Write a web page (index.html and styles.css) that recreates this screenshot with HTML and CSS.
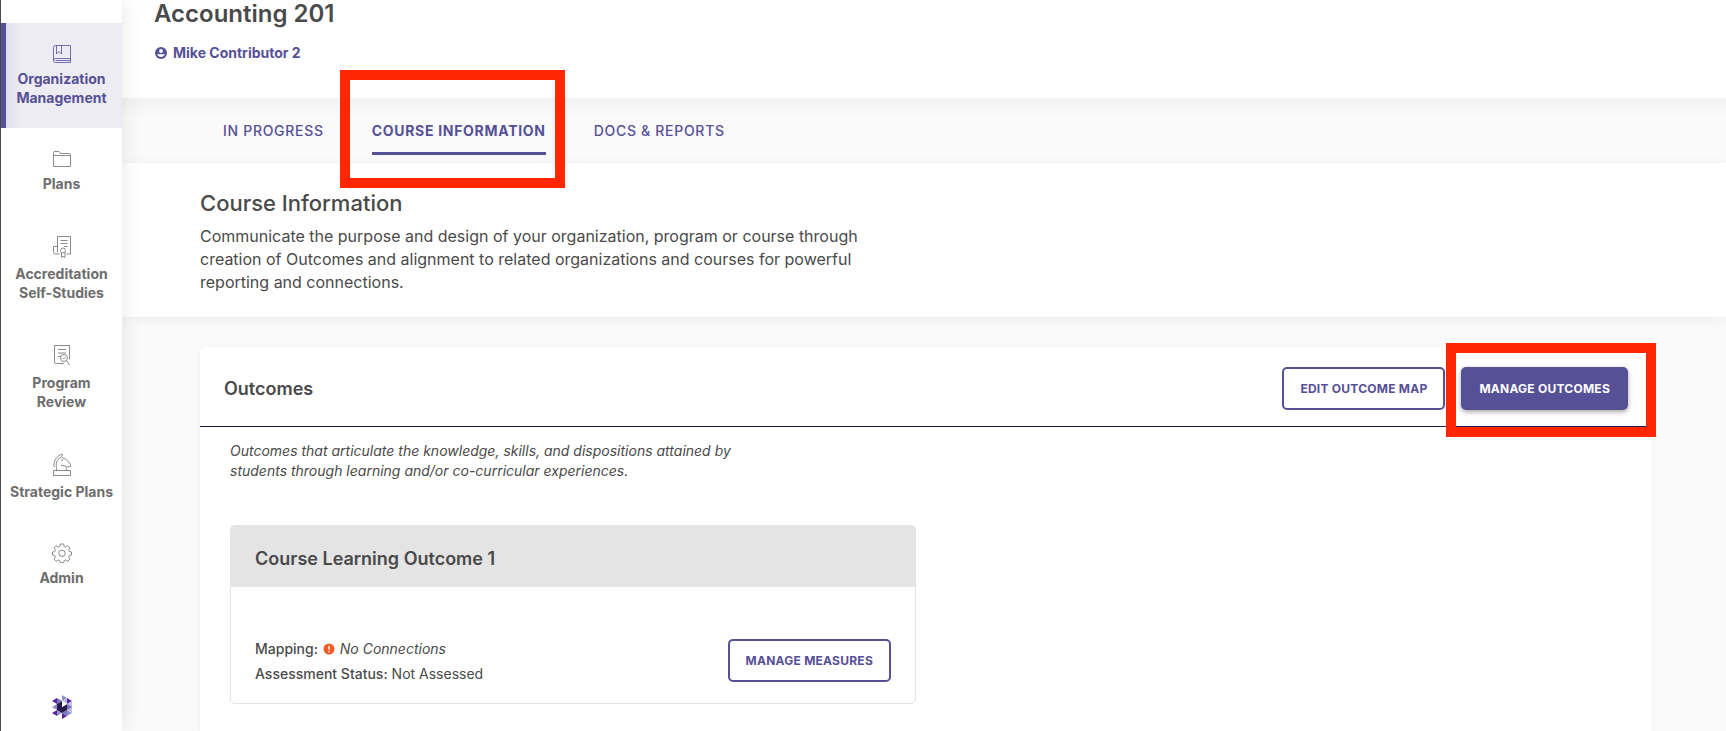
FILE: index.html
```html
<!DOCTYPE html>
<html lang="en">
<head>
    <meta charset="UTF-8">
    <meta name="viewport" content="width=device-width, initial-scale=1.0">
    <title>Accounting 201 - Course Information</title>
    <link rel="stylesheet" href="styles.css">
</head>
<body>

    <nav class="sidebar" aria-label="Main">
        <a class="nav-item active" href="#">
            <svg width="20" height="20" viewBox="0 0 20 20">
                <path d="M3.5 1.5h15v17h-15a2 2 0 0 1-2-2v-13a2 2 0 0 1 2-2z M1.5 16.5a2 2 0 0 1 2-2h15 M4.5 1.5v8.5l2.5-2.5 2.5 2.5V1.5 M3.5 16.5h15"/>
            </svg>
            Organization Management
        </a>
        <a class="nav-item" href="#">
            <svg width="20" height="20" viewBox="0 0 20 20">
                <path d="M1.5 17.5v-14a1 1 0 0 1 1-1h4.5l1.5 2h9a1 1 0 0 1 1 1v12z M1.5 6.5h17"/>
            </svg>
            Plans
        </a>
        <a class="nav-item" href="#">
            <svg width="20" height="24" viewBox="0 0 20 24">
                <path d="M5.5 17.5v-16h13v17.5h-4 M5.5 11.5h-4v6q0 1.5 2 1.5h4 M8.5 5.5h7 M8.5 8.5h7 M12 11.5h3.5"/>
                <circle cx="11" cy="15.5" r="2.5"/>
                <path d="M9.5 17.5v5l1.5-1.2 2 1.2v-5"/>
            </svg>
            Accreditation Self-Studies
        </a>
        <a class="nav-item" href="#">
            <svg width="20" height="24" viewBox="0 0 20 24">
                <path d="M12 19.5H4.5a2 2 0 0 1-2-2v-16h15v14 M6 5.5h8 M6 9h8 M6 12.5h3"/>
                <circle cx="12" cy="14" r="3.5"/>
                <path d="M14.5 16.5l3 4.5 M10.5 14l1 1 2-2"/>
            </svg>
            Program Review
        </a>
        <a class="nav-item" href="#">
            <svg width="20" height="24" viewBox="0 0 20 24">
                <path d="M1.5 17.5h17v5h-17z M4.5 17.5c0-5-1-8 1.5-11l3.5-3 1.5 1.5c4 1 5.5 4 7.5 6.5v2l-3 .5c-2-1-4-2-6.5-1.5 M14 14.5c0 1.5 1 1.5.5 3 M2 14c-.5-6 2-10.5 8-13l.5 2"/>
                <circle cx="10" cy="7" r=".4"/>
            </svg>
            Strategic Plans
        </a>
        <a class="nav-item" href="#">
            <svg width="20" height="20" viewBox="0 0 20 20">
                <path d="M8.3 1h3.4l.5 2.500 1.500.6 2.200-1.500 2 2.300-1.300 2 .6 1.500 2.300.6v3l-2.300.6-.6 1.500 1.300 2-2 2.300-2.200-1.500-1.500.6-.5 2.200H8.300l-.5-2.200-1.500-.6-2.200 1.500-2-2.300 1.300-2-.6-1.500-2.300-.6V9l2.300-.6.600-1.500-1.300-2 2-2.300 2.200 1.500 1.500-.6z"/>
                <circle cx="10" cy="10.3" r="3.2"/>
            </svg>
            Admin
        </a>

        <a class="logo" href="#" aria-label="Home">
            <svg width="22" height="24" viewBox="0 0 22 24">
                <path fill="#8f8fcf" d="M11 0l5 3-5 3z M1 12l5-3v6z M6 15l5 3-5 3z M16 15l5 3-5 3z"/>
                <path fill="#5b21a0" d="M1 6l5-3v6z M16 3l5 3-5 3z M1 18l5-3v6z M11 18l5 3-5 3z"/>
                <path fill="#c3bbe2" d="M11 6l5-3v6z M16 9l5-3v12l-5-3z"/>
                <path fill="#7773bd" d="M6 3l5 3-5 3z M11 18l5-3v6z M16 9l5 3-5 3z"/>
                <path fill="#2a1a4a" d="M11 6v6l5-3v6l-5 3-5-3V9z"/>
                <path fill="#fff" d="M11 6l5 3-5 3z"/>
            </svg>
        </a>
    </nav>

    <div class="page">
        <header class="page-header">
            <h1>Accounting 201</h1>
            <a class="owner" href="#">
                <svg width="14" height="12" viewBox="0 0 14 12">
                    <circle cx="7" cy="6" r="6" fill="#565096"/>
                    <circle cx="7" cy="4" r="1.9" fill="#fff"/>
                    <path fill="#fff" d="M3.2 7.3h7.6c-.7 1.8-2 2.7-3.8 2.7s-3.1-.9-3.8-2.7z"/>
                </svg>
                Mike Contributor 2
            </a>
        </header>

        <nav class="tabs" aria-label="Course">
            <a class="tab" href="#">IN PROGRESS</a>
            <a class="tab selected" href="#">COURSE INFORMATION<span class="highlight highlight-tab"></span></a>
            <a class="tab" href="#">DOCS &amp; REPORTS</a>
        </nav>

        <section class="intro">
            <h2>Course Information</h2>
            <p>Communicate the purpose and design of your organization, program or course through creation of Outcomes and alignment to related organizations and courses for powerful reporting and connections.</p>
        </section>

        <main class="content">
            <section class="card">
                <div class="card-header">
                    <h3>Outcomes</h3>
                    <div class="card-actions">
                        <button class="btn" type="button">EDIT OUTCOME MAP</button>
                        <div class="highlighted">
                            <button class="btn btn-primary" type="button">MANAGE OUTCOMES</button>
                            <span class="highlight highlight-button"></span>
                        </div>
                    </div>
                </div>
                <div class="card-body">
                    <p class="description">Outcomes that articulate the knowledge, skills, and dispositions attained by students through learning and/or co-curricular experiences.</p>
                    <div class="outcomes">
                        <article class="outcome">
                            <h4>Course Learning Outcome 1</h4>
                            <div class="outcome-body">
                                <div class="status">
                                    <p><strong>Mapping:</strong>
                                        <svg width="12" height="12" viewBox="0 0 12 12">
                                            <circle cx="6" cy="6" r="5.5" fill="#f15a24"/>
                                            <path stroke="#fff" stroke-width="1.4" d="M6 2.8v3.7 M6 7.8v1.4"/>
                                        </svg>
                                        <em>No Connections</em></p>
                                    <p><strong>Assessment Status:</strong> Not Assessed</p>
                                </div>
                                <button class="btn" type="button">MANAGE MEASURES</button>
                            </div>
                        </article>
                    </div>
                </div>
            </section>
        </main>
    </div>

</body>
</html>
```
FILE: styles.css
```css
* {
    box-sizing: border-box;
}
body {
    margin: 0;
    display: flex;
    min-height: 100vh;
    font-family: Inter, "Liberation Sans", sans-serif;
    font-size: 14px;
    color: #4a4a4a;
    background-color: #fafafa;
}
h1, h2, h3, h4, p {
    margin: 0;
}
a {
    color: #565096;
    text-decoration: none;
}

/* sidebar */
.sidebar {
    position: relative;
    z-index: 1;
    flex: 0 0 122px;
    display: flex;
    flex-direction: column;
    padding: 23px 0 12px;
    border-left: 1px solid #4a4a4f;
    background-color: #fff;
    box-shadow: 0 0 20px rgba(0, 0, 0, 0.1);
}
.nav-item {
    display: flex;
    flex-direction: column;
    align-items: center;
    gap: 5px;
    padding: 21px 8px;
    line-height: 19px;
    font-weight: 700;
    text-align: center;
    color: #6d6d6d;
}
.nav-item svg {
    fill: none;
    stroke: currentColor;
    stroke-width: 0.8;
}
.nav-item.active {
    color: #565096;
    background: linear-gradient(to right, #dddbeb, #edecf3 20px);
    box-shadow: inset 5px 0 #565096;
}
.logo {
    display: flex;
    justify-content: center;
    margin-top: auto;
}
.logo svg {
    display: block;
}

/* page */
.page {
    flex: 1;
    min-width: 0;
    display: flex;
    flex-direction: column;
}
.page-header {
    padding: 0 32px 35px;
    background-color: #fff;
}
h1 {
    font-size: 24px;
    line-height: 28px;
    font-weight: 600;
}
.owner {
    display: flex;
    align-items: center;
    gap: 5px;
    margin-top: 15px;
    line-height: 20px;
    font-weight: 700;
}
.tabs {
    display: flex;
    gap: 48px;
    padding: 17px 101px 8px;
    background: linear-gradient(#f2f2f2, #fafafa 20px);
}
.tab {
    position: relative;
    padding: 6px 0 11px;
    line-height: 20px;
    font-weight: 500;
    letter-spacing: 0.05em;
    border-bottom: 3px solid transparent;
}
.tab.selected {
    font-weight: 700;
    border-color: #565096;
}
.intro {
    padding: 26px 78px 23px;
    background-color: #fff;
    box-shadow: 0 2px 12px rgba(0, 0, 0, 0.06);
}
h2 {
    font-size: 22px;
    line-height: 28px;
    font-weight: 500;
}
.intro p {
    max-width: 680px;
    margin-top: 8px;
    font-size: 16px;
    line-height: 23px;
}

/* outcomes */
.content {
    flex: 1;
    display: flex;
    flex-direction: column;
    padding: 30px 74px 0 78px;
}
.card {
    flex: 1;
    border-radius: 5px 5px 0 0;
    background-color: #fff;
    box-shadow: 0 2px 6px rgba(0, 0, 0, 0.06);
}
.card-header {
    display: flex;
    justify-content: space-between;
    align-items: center;
    padding: 20px 24px 16px;
    border-bottom: 1px solid #2a1a4a;
}
h3, h4 {
    font-size: 18px;
    line-height: 24px;
    font-weight: 600;
}
.card-actions {
    display: flex;
    gap: 16px;
}
.btn {
    padding: 12px 16px;
    font-family: inherit;
    font-size: 12px;
    line-height: 15px;
    font-weight: 700;
    letter-spacing: 0.02em;
    color: #565096;
    background-color: #fff;
    border: 2px solid #565096;
    border-radius: 5px;
    cursor: pointer;
}
.btn-primary {
    color: #fff;
    background-color: #565096;
    box-shadow: 0 2px 5px rgba(0, 0, 0, 0.35);
}
.card-body {
    padding: 14px 30px 24px;
}
.description {
    max-width: 520px;
    line-height: 20px;
    font-style: italic;
}
.outcomes {
    display: grid;
    grid-template-columns: 1fr 1fr;
    gap: 20px;
    margin-top: 44px;
}
.outcome {
    border: 1px solid #e4e4e4;
    border-radius: 5px;
}
h4 {
    padding: 21px 24px 16px;
    background-color: #e4e4e4;
}
.outcome-body {
    display: flex;
    justify-content: space-between;
    align-items: center;
    padding: 47px 24px 17px;
}
.status {
    padding-top: 2px;
    line-height: 25px;
}
.status strong {
    font-weight: 500;
}
.status svg {
    margin: 0 1px;
    vertical-align: -1px;
}

/* callout frames */
.highlight {
    position: absolute;
    border: 10px solid #ff2600;
    pointer-events: none;
}
.highlighted {
    position: relative;
}
.highlight-tab {
    inset: -45px -19px -36px -32px;
}
.highlight-button {
    inset: -24px -28px -27px -15px;
}
```
